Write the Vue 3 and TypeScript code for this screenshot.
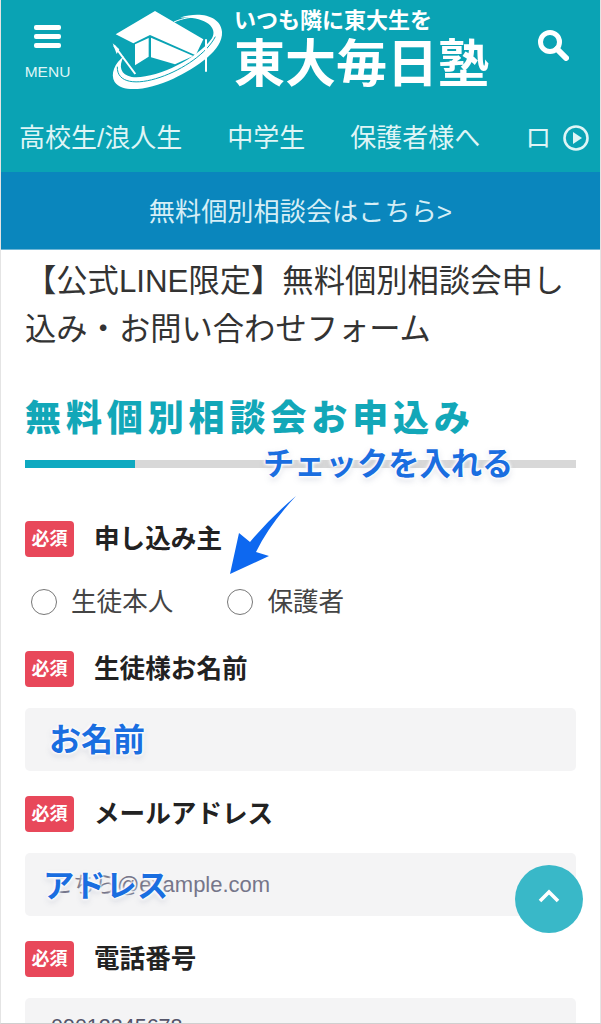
<script setup lang="ts">
interface Field {
  label: string
  placeholder: string
  type: 'radio' | 'input'
  cls?: string
}
const fields: Field[] = [
  { label: '申し込み主', placeholder: '', type: 'radio' },
  { label: '生徒様お名前', placeholder: '', type: 'input' },
  { label: 'メールアドレス', placeholder: 'こちら@example.com', type: 'input' },
  { label: '電話番号', placeholder: '09012345678', type: 'input', cls: 'input-phone' }
]
const nav = ['高校生/浪人生', '中学生', '保護者様へ', 'ロ']
</script>

<template>
  <div class="page">
    <header class="header">
      <div class="brand-row">
        <button class="menu">
          <span class="bars"><i></i><i></i><i></i></span>
          <span class="menu-label">MENU</span>
        </button>
        <svg class="logo" viewBox="0 0 390 330">
          <path fill="#fff" d="M240 53C300 33 362 48 366 95C370 150 290 202 220 236C150 268 70 282 44 246C30 222 44 190 72 168C54 200 62 224 95 231C160 240 290 180 336 115C356 80 310 48 240 53Z" />
          <path fill="none" stroke="#0aa3b4" stroke-width="3" d="M52 200C50 250 110 256 180 232C250 208 320 160 346 110" />
          <path fill="none" stroke="#fff" stroke-width="3" d="M222 66C270 44 345 42 352 90" />
          <path fill="#fff" d="M165 33L310 118L287 166L150 105L100 130L47 103Z" />
          <path fill="#fff" d="M153 113L280 168L225 193L153 172Z" />
          <path fill="#fff" d="M105 133L146 114L146 170L105 196Z" />
          <path fill="none" stroke="#fff" stroke-width="6" d="M42 136L106 222" />
          <path fill="#fff" d="M38 130L58 148L50 162Z" />
          <path fill="none" stroke="#fff" stroke-width="6" d="M318 118V215" />
        </svg>
        <div class="wordmark">
          <div class="tagline">いつも隣に東大生を</div>
          <div class="school">東大毎日塾</div>
        </div>
        <svg class="search" viewBox="0 0 32 32">
          <circle cx="13" cy="13" r="9.5" fill="none" stroke="#fff" stroke-width="5" />
          <path d="M20 20L29 29" stroke="#fff" stroke-width="6" stroke-linecap="round" />
        </svg>
      </div>
      <nav class="nav">
        <span v-for="item in nav" :key="item" class="nav-item">{{ item }}</span>
        <span class="nav-more">
          <svg viewBox="0 0 26 26">
            <circle cx="13" cy="13" r="11.5" fill="none" stroke="#dff5f6" stroke-width="2.6" />
            <path d="M10 7L19 13L10 19Z" fill="#dff5f6" />
          </svg>
        </span>
      </nav>
    </header>
    <div class="cta">無料個別相談会はこちら&gt;</div>

    <main class="content">
      <h1 class="title">【公式LINE限定】無料個別相談会申し込み・お問い合わせフォーム</h1>
      <h2 class="heading">無料個別相談会お申込み</h2>
      <div class="rule"><span></span></div>

      <template v-for="field in fields" :key="field.label">
        <div class="field-label">
          <span class="badge">必須</span>
          <span class="label-text">{{ field.label }}</span>
        </div>
        <div v-if="field.type === 'radio'" class="radios">
          <label class="radio"><i></i>生徒本人</label>
          <label class="radio"><i></i>保護者</label>
        </div>
        <div v-else class="input" :class="field.cls">
          <span class="placeholder">{{ field.placeholder }}</span>
        </div>
      </template>
    </main>

    <div class="note note-check">チェックを入れる</div>
    <svg class="arrow" viewBox="0 0 80 90">
      <path fill="#0d68f0" d="M67 1Q40 30 27 57L40 61L1 79L10 38L21 47Q42 22 67 1Z" />
    </svg>
    <div class="note note-name">お名前</div>
    <div class="note note-mail">アドレス</div>
    <button class="to-top">
      <svg viewBox="0 0 24 16">
        <path d="M3 13L12 4L21 13" fill="none" stroke="#fff" stroke-width="3.6" />
      </svg>
    </button>
  </div>
</template>

<style scoped>
.page {
  position: relative;
  width: 601px;
  height: 1024px;
  overflow: hidden;
  box-sizing: border-box;
  background: #fff;
  border-left: 1px solid #e4e4e4;
  border-right: 1px solid #e4e4e4;
  border-bottom: 1px solid #cfcfcf;
  font-family: "Liberation Sans", "Noto Sans CJK JP", sans-serif;
  color: #333;
}
.header {
  margin: 0 -1px;
  background: #0aa3b4;
}
.brand-row {
  height: 113px;
  display: flex;
  align-items: flex-start;
}
.menu {
  width: 45px;
  margin: 25px 0 0 25px;
  padding: 0;
  border: 0;
  background: none;
  color: #dff5f6;
  display: flex;
  flex-direction: column;
  align-items: center;
}
.bars {
  width: 27px;
  display: flex;
  flex-direction: column;
  gap: 4px;
}
.bars i {
  display: block;
  height: 5px;
  border-radius: 2px;
  background: #fff;
}
.menu-label {
  margin-top: 18px;
  font-size: 15.5px;
  line-height: 12px;
  font-family: "Liberation Sans", sans-serif;
}
.logo {
  width: 130px;
  height: 110px;
  margin-left: 30px;
  flex: none;
}
.wordmark {
  margin-left: 4px;
  color: #fff;
}
.tagline {
  margin-top: 8px;
  font-size: 22px;
  line-height: 26px;
  font-weight: 700;
  white-space: nowrap;
}
.school {
  margin-top: 1px;
  font-size: 51px;
  line-height: 60px;
  font-weight: 700;
  white-space: nowrap;
}
.search {
  width: 32px;
  height: 32px;
  margin: 29px 0 0 48px;
  flex: none;
}
.nav {
  position: relative;
  height: 59px;
  display: flex;
  align-items: flex-start;
  gap: 45px;
  padding-left: 19px;
  overflow: hidden;
  white-space: nowrap;
  font-size: 26px;
  line-height: 50px;
  color: #dff5f6;
}
.nav-more {
  position: absolute;
  top: 0;
  right: 0;
  width: 48px;
  height: 59px;
  background: #0aa3b4;
}
.nav-more svg {
  display: block;
  width: 26px;
  height: 26px;
  margin: 12px 0 0 10px;
}
.cta {
  margin: 0 -1px;
  height: 78px;
  box-sizing: border-box;
  padding-top: 2px;
  background: #0a86bd;
  border-bottom: 1px solid #6fb6d6;
  color: #d5eef6;
  font-size: 26.2px;
  line-height: 76px;
  text-align: center;
}
.content {
  padding: 8px 24px 0;
}
.title {
  margin: 0;
  font-size: 31.3px;
  line-height: 48px;
  font-weight: 400;
  color: #333;
}
.heading {
  margin: 45px 0 0;
  font-size: 36px;
  line-height: 40px;
  font-weight: 900;
  letter-spacing: 4.9px;
  white-space: nowrap;
  color: #12a7b8;
}
.rule {
  margin-top: 21px;
  height: 8px;
  background: #d8d8d8;
}
.rule span {
  display: block;
  width: 110px;
  height: 8px;
  background: #0ea9c0;
}
.field-label {
  margin-top: 25px;
  height: 36px;
  display: flex;
  align-items: center;
  gap: 20px;
}
.rule + .field-label {
  margin-top: 53px;
}
.radios + .field-label {
  margin-top: 36px;
}
.badge {
  width: 49px;
  height: 36px;
  border-radius: 4px;
  background: #e8485a;
  color: #fff;
  font-size: 18px;
  line-height: 36px;
  font-weight: 700;
  text-align: center;
}
.label-text {
  padding-bottom: 6px;
  font-size: 25.6px;
  font-weight: 700;
  color: #222;
  white-space: nowrap;
}
.radios {
  margin: 32px 0 0 6px;
  height: 26px;
  display: flex;
  gap: 54px;
}
.radio {
  display: flex;
  align-items: center;
  gap: 14px;
  font-size: 25.6px;
  line-height: 26px;
  color: #444;
}
.radio i {
  width: 26px;
  height: 26px;
  box-sizing: border-box;
  border: 1.5px solid #777;
  border-radius: 50%;
}
.input {
  margin-top: 21px;
  height: 63px;
  padding-left: 26px;
  border-radius: 5px;
  background: #f4f4f5;
  font-size: 22px;
  line-height: 63px;
  color: #76768a;
}
.input-phone {
  font-size: 21.5px;
  line-height: 58px;
  color: #55556a;
}
.note {
  position: absolute;
  font-weight: 700;
  white-space: nowrap;
  color: #1a6ee0;
  text-shadow: 0 0 2px #fff, 0 0 2px #fff, 0 0 3px #fff, 0 0 4px #fff, 0 0 5px #fff, 0 3px 6px rgba(120, 130, 160, 0.3);
}
.note-check {
  left: 262px;
  top: 445px;
  font-size: 31.3px;
  line-height: 40px;
}
.note-name {
  left: 48px;
  top: 720px;
  font-size: 32px;
  line-height: 40px;
}
.note-mail {
  left: 42px;
  top: 867px;
  font-size: 31.3px;
  line-height: 40px;
}
.arrow {
  position: absolute;
  left: 228px;
  top: 495px;
  width: 80px;
  height: 90px;
}
.to-top {
  position: absolute;
  left: 514px;
  top: 865px;
  width: 68px;
  height: 68px;
  padding: 0;
  border: 0;
  border-radius: 50%;
  background: #39b8c8;
  display: flex;
  align-items: center;
  justify-content: center;
}
.to-top svg {
  width: 24px;
  height: 16px;
  margin-bottom: 6px;
}
</style>
